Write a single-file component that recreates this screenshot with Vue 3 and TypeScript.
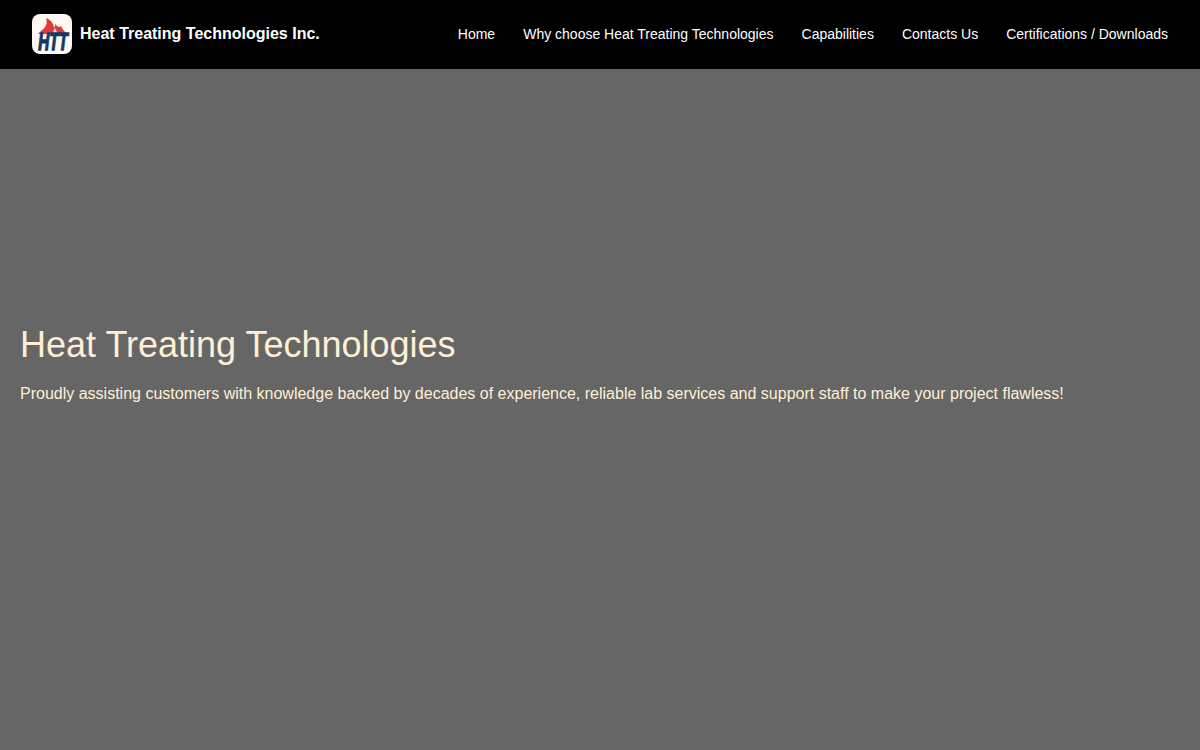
<template>
  <div class="page">
    <header class="topbar">
      <a class="brand" href="#">
        <span class="logo">
          <svg viewBox="0 0 40 40" width="40" height="40">
            <path d="M6 20 C9 16 13 15 14 11 C15 9 15 7 14 4 C19 6 21 9 22 13 C23 14 23 13 23 10 C26 13 27 14 29 12 C30 15 33 18 35 20 Z" fill="#e0393a" />
            <path d="M21 20 C21 18 22 16 23 14 C24 16 25 18 25 20 Z" fill="#fdf8f0" />
            <text transform="translate(21 36) scale(0.95 1.5)" text-anchor="middle" class="logo-text">HTT</text>
          </svg>
        </span>
        <span class="brand-name">Heat Treating Technologies Inc.</span>
      </a>
      <nav class="nav">
        <a v-for="link in links" :key="link" href="#">{{ link }}</a>
      </nav>
    </header>
    <section class="hero">
      <h1>Heat Treating Technologies</h1>
      <p>Proudly assisting customers with knowledge backed by decades of experience, reliable lab services and support staff to make your project flawless!</p>
    </section>
  </div>
</template>

<script setup lang="ts">
const links: string[] = [
  "Home",
  "Why choose Heat Treating Technologies",
  "Capabilities",
  "Contacts Us",
  "Certifications / Downloads",
];
</script>

<style>
body {
  background-color: #666;
}
</style>

<style scoped>
.page {
  display: flex;
  flex-direction: column;
  min-height: 750px;
  font-family: "Liberation Sans", Arial, sans-serif;
}
.topbar {
  display: flex;
  align-items: center;
  justify-content: space-between;
  height: 68px;
  padding: 0 32px;
  background-color: #000;
  border-bottom: 1px solid #000;
}
.brand {
  display: flex;
  align-items: center;
  gap: 8px;
  color: #fff;
  text-decoration: none;
}
.logo {
  display: flex;
  width: 40px;
  height: 40px;
  border-radius: 8px;
  background-color: #fdf8f0;
}
.logo-text {
  font-family: "Liberation Sans", Arial, sans-serif;
  font-size: 16px;
  font-weight: 700;
  font-style: italic;
  fill: #0f3a68;
  stroke: #0f3a68;
  stroke-width: 0.9px;
}
.brand-name {
  font-size: 16px;
  font-weight: 700;
}
.nav {
  display: flex;
  gap: 28px;
}
.nav a {
  color: #fff;
  font-size: 14px;
  text-decoration: none;
}
.hero {
  flex: 1;
  padding: 256px 20px 0;
  background-color: #666;
  color: #ffefd5;
}
h1 {
  margin: 0 0 17px;
  font-size: 36px;
  font-weight: 400;
  line-height: 40px;
}
p {
  margin: 0;
  font-size: 16px;
  line-height: 24px;
}
</style>
